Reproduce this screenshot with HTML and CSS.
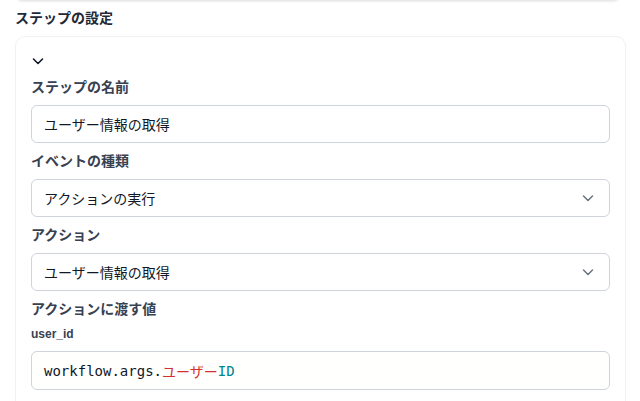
FILE: index.html
```html
<!DOCTYPE html>
<html lang="ja">
<head>
<meta charset="utf-8">
<title>ステップの設定</title>
<link rel="stylesheet" href="styles.css">
</head>
<body>

<div class="page">
	<div class="prev-card"></div>

	<h2 class="section-title">ステップの設定</h2>

	<div class="step-card">
		<button type="button" class="collapse">
			<svg width="14" height="14" viewBox="0 0 14 14"><path d="M2.5 5 L7 9.5 L11.5 5" fill="none" stroke="#111827" stroke-width="1.6" stroke-linecap="round" stroke-linejoin="round"/></svg>
		</button>

		<label class="field-label">ステップの名前</label>
		<div class="field">ユーザー情報の取得</div>

		<label class="field-label">イベントの種類</label>
		<div class="field select">
			<span>アクションの実行</span>
			<svg width="14" height="14" viewBox="0 0 14 14"><path d="M2.5 5 L7 9.5 L11.5 5" fill="none" stroke="#6b7280" stroke-width="1.5" stroke-linecap="round" stroke-linejoin="round"/></svg>
		</div>

		<label class="field-label">アクション</label>
		<div class="field select">
			<span>ユーザー情報の取得</span>
			<svg width="14" height="14" viewBox="0 0 14 14"><path d="M2.5 5 L7 9.5 L11.5 5" fill="none" stroke="#6b7280" stroke-width="1.5" stroke-linecap="round" stroke-linejoin="round"/></svg>
		</div>

		<label class="field-label">アクションに渡す値</label>
		<label class="arg-label">user_id</label>
		<div class="field code"><span class="tok-plain">workflow.args.</span><span class="tok-jp">ユーザー</span><span class="tok-id">ID</span></div>
	</div>
</div>

</body>
</html>
```

FILE: styles.css
```css
body {
	margin: 0;
	background: #ffffff;
	font-family: "Liberation Sans", "Noto Sans CJK JP", sans-serif;
	color: #1f2937;
	overflow: hidden;
}

.page {
	padding: 0 14px 0 15px;
}

.prev-card {
	height: 20px;
	margin-top: -21px;
	margin-right: 5px;
	border: 1px solid #e6e8ec;
	border-radius: 8px;
	box-shadow: 0 1px 2px rgba(0, 0, 0, 0.08);
	background: #fff;
}

.section-title {
	margin: 7px 0 8px;
	font-size: 14px;
	line-height: 20px;
	font-weight: bold;
	color: #1f2937;
}

.step-card {
	display: flex;
	flex-direction: column;
	padding: 16px 15px 30px;
	border: 1px solid #f0f1f3;
	border-radius: 10px;
	background: #fff;
}

.collapse {
	display: flex;
	align-items: center;
	width: 16px;
	height: 16px;
	padding: 0;
	margin: 0 0 8px;
	border: 0;
	background: none;
}

.field-label {
	margin: 0 0 8px;
	font-size: 14px;
	line-height: 20px;
	font-weight: bold;
	color: #374151;
}

.arg-label {
	margin: -1px 0 9px;
	font-size: 12px;
	line-height: 16px;
	font-weight: bold;
	color: #374151;
}

.field {
	display: flex;
	align-items: center;
	justify-content: space-between;
	height: 36px;
	margin-bottom: 8px;
	padding: 0 14px 0 12px;
	border: 1px solid #cfd3dc;
	border-radius: 6px;
	font-size: 14px;
	color: #111827;
	background: #fff;
}

.field.code {
	height: 37px;
	background: #fffffe;
	font-family: "DejaVu Sans Mono", "Noto Sans CJK JP", monospace;
	font-size: 14px;
	justify-content: flex-start;
}

.tok-plain {
	color: #111827;
}

.tok-jp {
	color: #d32f2f;
}

.tok-id {
	color: #00838f;
}
```
